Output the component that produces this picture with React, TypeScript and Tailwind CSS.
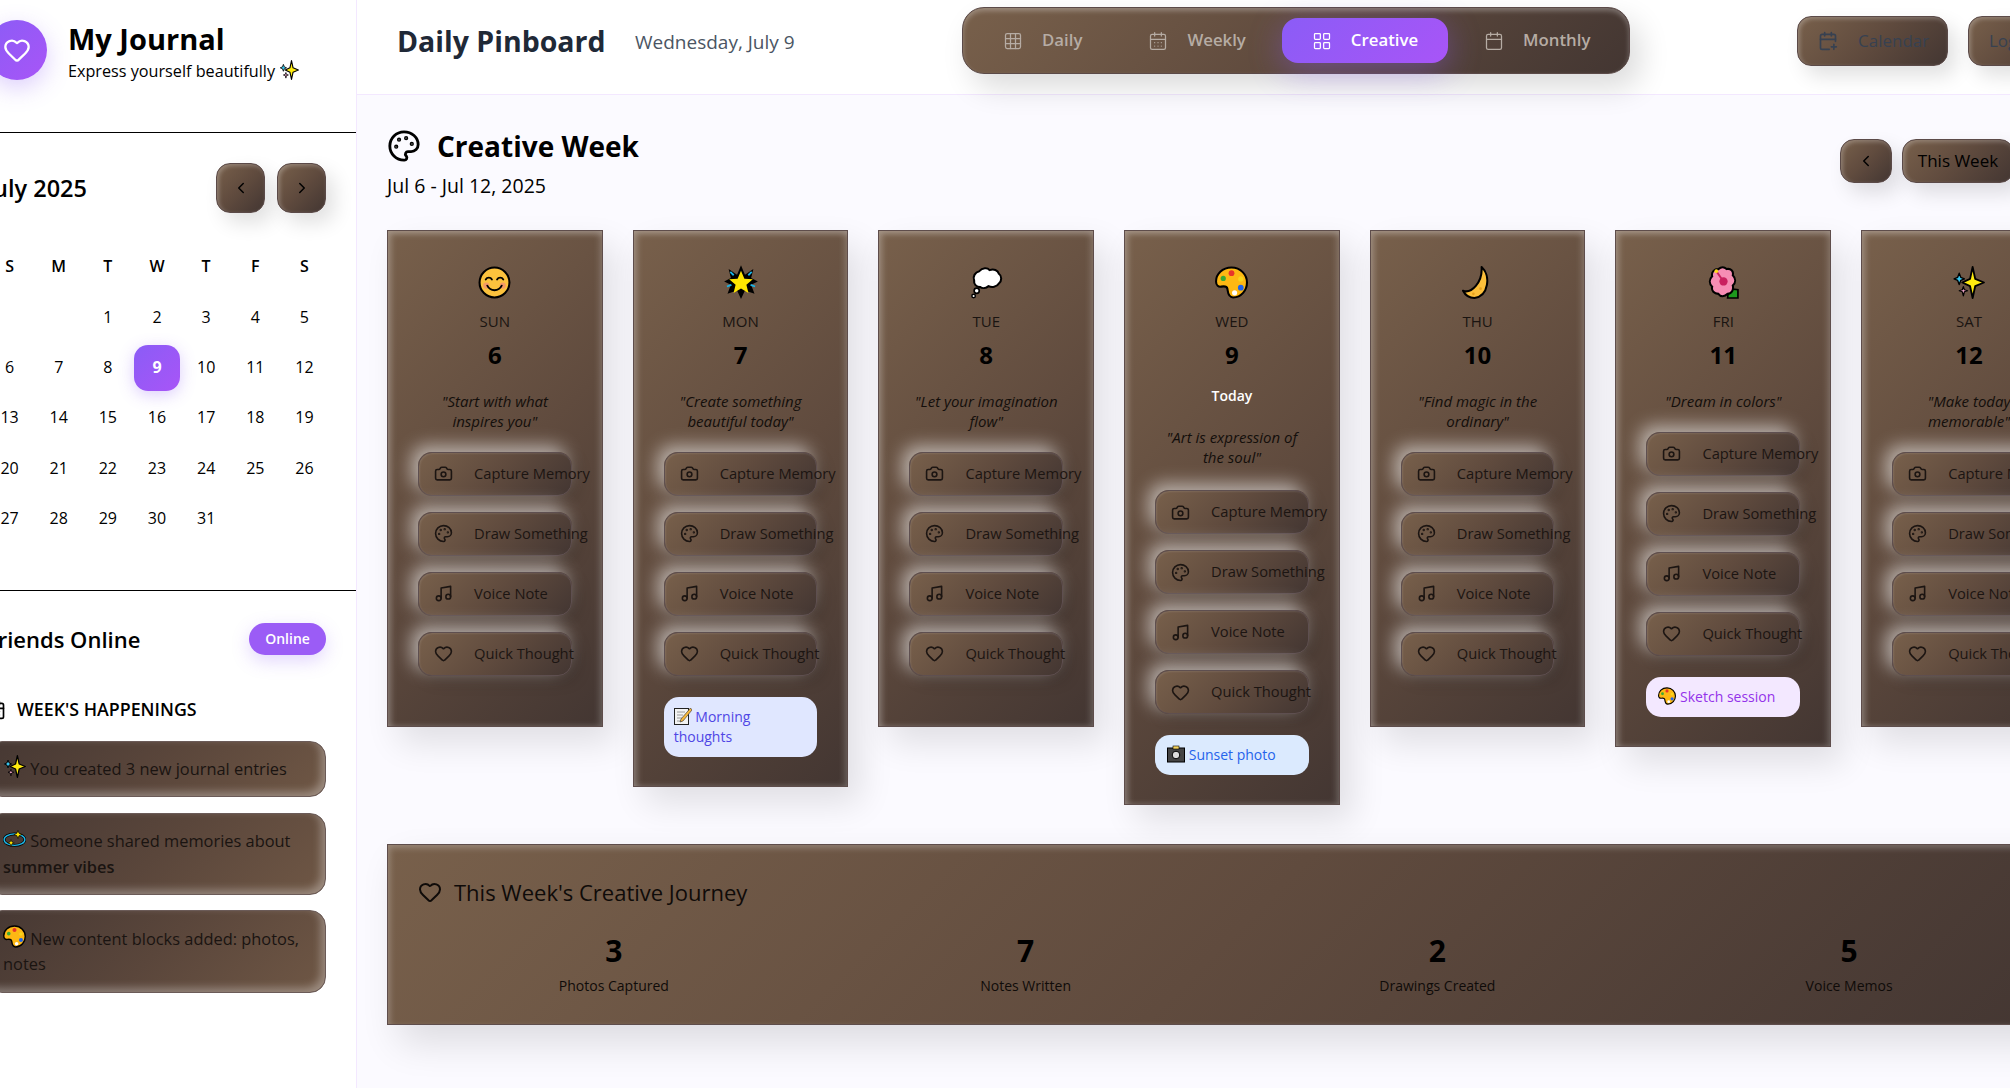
import React from "react";
import { Camera, Palette, Music, Heart, ChevronLeft, ChevronRight, Grid3x3, CalendarDays, LayoutGrid, Calendar, CalendarPlus } from "lucide-react";

const FONT = "[font-family:'Open_Sans','Noto_Sans',sans-serif]";
const BROWN = "bg-[linear-gradient(135deg,#78604b_0%,#604b3e_50%,#433632_100%)]";
const BTN = "bg-[linear-gradient(135deg,#78604b_0%,#604b3e_50%,#433632_100%)] border border-[#5b4a48] shadow-[inset_2px_2px_4px_rgba(255,255,255,0.25),8px_10px_20px_rgba(0,0,0,0.12)]";

type E = { s?: number };
const Smile = ({ s = 32 }: E) => (
  <svg width={s} height={s} viewBox="0 0 32 32"><circle cx="16" cy="16" r="14.5" fill="#fcc23d" stroke="#000" strokeWidth="2" /><circle cx="8" cy="19" r="3" fill="#f59a66" /><circle cx="24" cy="19" r="3" fill="#f59a66" /><path d="M7.500 13a3.500 3.500 0 0 1 6 0M18.500 13a3.500 3.500 0 0 1 6 0M9 19c3 6 11 6 14 0" fill="none" stroke="#000" strokeWidth="1.800" strokeLinecap="round" /></svg>
);
const Star = ({ s = 32 }: E) => (
  <svg width={s} height={s} viewBox="0 0 32 32"><path d="M16 1l3.500 8.500L27 4.500l-2 8 6 3-6 3 3 8-8.500-3L16 31l-3.500-7.500L4 26.500l3-8-6-3 6-3-2-8 7.500 5z" fill="#000" /><path d="M16 6l3 7 7.500.600-5.700 4.900 1.800 7.300L16 21.800 9.400 25.800l1.800-7.300-5.700-4.900L13 13z" fill="#ffe600" /><path d="M6.500 7l3 3M25.500 7l-3 3M3.500 20l4-1.500M28.500 20l-4-1.500" stroke="#19b4e8" strokeWidth="1.600" /></svg>
);
const Balloon = ({ s = 32 }: E) => (
  <svg width={s} height={s} viewBox="0 0 32 32"><path d="M9 5c3-3.500 8-3.500 10-1 4-1.500 8 0 9 3.500 3 2 3 7 0 9.500-2 3.500-7 4-10 2.500-2.500 2-6 2.500-8 1-4 0-6.500-3-6-6.500C2.500 10 5 6 9 5z" fill="#fff" stroke="#000" strokeWidth="2" /><circle cx="6.500" cy="24" r="2.500" fill="#fff" stroke="#000" strokeWidth="1.600" /><circle cx="3.500" cy="29" r="1.700" fill="#fff" stroke="#000" strokeWidth="1.400" /></svg>
);
const Pal = ({ s = 32 }: E) => (
  <svg width={s} height={s} viewBox="0 0 32 32"><path d="M16 1.500C7 1.500 1 8 1 15c0 4 2.500 5.500 5 5 3-.5 5.500-.5 6 2 .5 3 .5 8.500 5.500 8.500 8 0 13.500-7 13.500-14.500S25 1.500 16 1.500z" fill="#fdb813" stroke="#000" strokeWidth="2" /><circle cx="16" cy="7" r="2.800" fill="#e8352b" /><circle cx="8" cy="12" r="2.500" fill="#3aa935" /><circle cx="25" cy="12.500" r="2.500" fill="#f8d51c" /><circle cx="25" cy="21" r="2.800" fill="#1e63e9" /><circle cx="19" cy="26" r="2.500" fill="#fff" /></svg>
);
const Moon = ({ s = 32 }: E) => (
  <svg width={s} height={s} viewBox="0 0 32 32"><path d="M20 1c9 8 7 28-7 30-6 0-9-3-11-7 8 3 19-8 18-23z" fill="#fcbf3a" stroke="#000" strokeWidth="2" strokeLinejoin="round" /><circle cx="19" cy="22" r="1.300" fill="#e6a01e" /><circle cx="12" cy="27" r="1.300" fill="#e6a01e" /></svg>
);
const Flower = ({ s = 32 }: E) => (
  <svg width={s} height={s} viewBox="0 0 32 32"><path d="M21 22l9 1v8H20z" fill="#1d9a1d" stroke="#000" strokeWidth="1.600" /><path d="M11 3c3-2.500 6-2 8 0 4-1 7 2 6 6 3 3 3 7 0 10 1 4-1 8-5 8-3 3-7 3-9 0-4 0-7-3-6-7-3-3-3-7 0-10-1-4 2-7 6-7z" fill="#f68db4" stroke="#000" strokeWidth="2" /><circle cx="16" cy="15" r="4" fill="#c9215f" /><path d="M16 15L9 5" stroke="#c9215f" strokeWidth="1.800" /><circle cx="9" cy="5" r="1.800" fill="#ffd91c" /></svg>
);
const Sparkles = ({ s = 32 }: E) => (
  <svg width={s} height={s} viewBox="0 0 32 32"><path d="M20 1l2.500 11.500L31 16l-8.500 3.500L20 31l-2.500-11.500L10 16l7.500-3.500z" fill="#ffeb0f" stroke="#000" strokeWidth="1.800" strokeLinejoin="round" /><path d="M7 7l1.500 4L12 12.500 8.500 14 7 18l-1.500-4L2 12.500 5.500 11z" fill="#39c6ee" stroke="#000" strokeWidth="1.300" strokeLinejoin="round" /><path d="M11 20l1 3 3 1-3 1-1 4-1-4-3-1 3-1z" fill="#f7a8cf" stroke="#000" strokeWidth="1.200" strokeLinejoin="round" /></svg>
);
const Memo = ({ s = 18 }: E) => (
  <svg width={s} height={s} viewBox="0 0 18 18"><rect x=".5" y="1.500" width="14" height="16" fill="#f3f3f3" stroke="#222" /><path d="M3 5h8M3 8h6M3 11h5M3 14h5" stroke="#9a9a9a" /><path d="M16.500 1L7 12l-1 3 3-1L18 3z" fill="#f6b73c" stroke="#333" strokeWidth=".6" /></svg>
);
const CamE = ({ s = 18 }: E) => (
  <svg width={s} height={s} viewBox="0 0 18 18"><rect x=".5" y="3" width="17" height="14" fill="#444" stroke="#000" /><rect x="6" y="1" width="6" height="3" fill="#f4d35e" stroke="#000" strokeWidth=".6" /><circle cx="9" cy="10" r="3.800" fill="#ddd" stroke="#000" /></svg>
);
const Planet = ({ s = 18 }: E) => (
  <svg width={s} height={s} viewBox="0 0 20 20"><ellipse cx="10" cy="11" rx="9" ry="5" fill="none" stroke="#000" strokeWidth="2.500" /><ellipse cx="10" cy="11" rx="9" ry="5" fill="none" stroke="#1eb6e6" strokeWidth="1.200" /><path d="M13 3l1 2.500 2.500 1-2.500 1-1 2.500-1-2.500-2.500-1 2.500-1z" fill="#ffe600" stroke="#000" strokeWidth=".6" /><path d="M7 11l.8 2 2 .8-2 .8-.8 2-.8-2-2-.8 2-.8z" fill="#ffe600" stroke="#000" strokeWidth=".5" /></svg>
);
const Inline = ({ C, s = 18 }: { C: React.FC<E>; s?: number }) => (
  <span className="inline-flex h-[14px] items-center align-[-3px]"><C s={s} /></span>
);

const days = [
  { e: Smile, d: "SUN", n: 6, q: '"Start with what\ninspires you"' },
  { e: Star, d: "MON", n: 7, q: '"Create something\nbeautiful today"', tile: "m", es: 36 },
  { e: Balloon, d: "TUE", n: 8, q: '"Let your imagination\nflow"' },
  { e: Pal, d: "WED", n: 9, q: '"Art is expression of\nthe soul"', today: true, tile: "w" },
  { e: Moon, d: "THU", n: 10, q: '"Find magic in the\nordinary"' },
  { e: Flower, d: "FRI", n: 11, q: '"Dream in colors"', tile: "f" },
  { e: Sparkles, d: "SAT", n: 12, q: '"Make today\nmemorable"' },
];
const actions = [
  { I: Camera, t: "Capture Memory" },
  { I: Palette, t: "Draw Something" },
  { I: Music, t: "Voice Note" },
  { I: Heart, t: "Quick Thought" },
];

function ActionBtn({ I, t }: { I: any; t: string }) {
  return (
    <div className={`h-[44px] rounded-[14px] ${BROWN} border border-[#5e4f50] flex items-center pl-[15px] gap-[21px] whitespace-nowrap text-[14.700px] font-medium text-[#1c1512] shadow-[-6px_-6px_18px_rgba(255,255,255,0.58),5px_5px_15px_rgba(0,0,0,0.18),inset_1px_1px_2px_rgba(255,255,255,0.1)]`}>
      <I size={19} className="shrink-0" strokeWidth={2} />
      <span>{t}</span>
    </div>
  );
}

function DayCard({ e: Em, d, n, q, today, tile, es }: any) {
  return (
    <div className={`w-[215.700px] shrink-0 self-start ${BROWN} border border-[#5e4d4b] px-[30px] pt-[31px] pb-[29px] text-center text-[#1a1411] shadow-[inset_3px_3px_6px_rgba(255,255,255,0.28),inset_-3px_0_6px_rgba(255,255,255,0.16),12px_16px_32px_rgba(0,0,0,0.11)]`}>
      <div className="h-[40px] flex items-center justify-center"><Em s={es ?? 33} /></div>
      <div className="mt-[8px] text-[15px] font-medium leading-[22.4px]">{d}</div>
      <div className="mt-[4px] text-[24px] font-bold leading-[38.4px] text-black">{n}</div>
      {today && <div className="mt-[10px] mb-[20px] text-[14px] font-semibold leading-[22.4px] text-white">Today</div>}
      <div className="mt-[16px] -mx-[8px] text-[15px] italic font-medium leading-[20px] text-[#130e0b] whitespace-pre-line">{q}</div>
      <div className={`${today ? "mt-[23px]" : "mt-[21px]"} mb-[21px] flex flex-col gap-[16px] text-left`}>
        {actions.map((a) => <ActionBtn key={a.t} {...a} />)}
      </div>
      {tile === "m" && <div className="rounded-[15px] bg-[#e0e7ff] text-[#4f46e5] text-[14px] leading-[20px] px-[10px] py-[10px] text-left"><Inline C={Memo} /> Morning thoughts</div>}
      {tile === "w" && <div className="rounded-[15px] bg-[#dbeafe] text-[#2563eb] text-[14px] leading-[20px] px-[12px] py-[10px] text-left whitespace-nowrap"><Inline C={CamE} /> Sunset photo</div>}
      {tile === "f" && <div className="rounded-[15px] bg-[#f3e8ff] text-[#9333ea] text-[14px] leading-[20px] px-[12px] py-[10px] text-left whitespace-nowrap"><Inline C={Pal} /> Sketch session</div>}
    </div>
  );
}

const weeks = ["S", "M", "T", "W", "T", "F", "S"];
const cal: (number | null)[] = [null, null, 1, 2, 3, 4, 5, 6, 7, 8, 9, 10, 11, 12, 13, 14, 15, 16, 17, 18, 19, 20, 21, 22, 23, 24, 25, 26, 27, 28, 29, 30, 31];

function Sidebar() {
  return (
    <aside className="w-[401px] shrink-0 bg-white border-r border-[#f3e8ff] text-black h-full">
      <div className="h-[133px] border-b border-black pl-[31px] pr-[30px] pt-[16px] flex items-start gap-[21px]">
        <div className="mt-[4px] w-[60px] h-[60px] rounded-full bg-[linear-gradient(135deg,#8b5cf6,#a855f7)] flex items-center justify-center shadow-[0_8px_24px_rgba(139,92,246,0.3)]">
          <Heart size={28} className="text-white" strokeWidth={2} />
        </div>
        <div>
          <div className="text-[29px] font-bold leading-[45px]">My Journal</div>
          <div className="-mt-[2px] text-[16.200px] leading-[24px] whitespace-nowrap">Express yourself beautifully <Inline C={Sparkles} s={20} /></div>
        </div>
      </div>
      <div className="h-[458px] border-b border-black px-[30px] pt-[30px]">
        <div className="flex items-center justify-between h-[50px] mb-[31px]">
          <div className="text-[23.500px] font-semibold pt-[2px]">July 2025</div>
          <div className="flex gap-[12px]">
            <div className={`w-[49px] h-[50px] rounded-[14px] ${BTN} flex items-center justify-center`}><ChevronLeft size={18} /></div>
            <div className={`w-[49px] h-[50px] rounded-[14px] ${BTN} flex items-center justify-center`}><ChevronRight size={18} /></div>
          </div>
        </div>
        <div className="grid grid-cols-7 gap-[4px] ml-[1px] -mr-[1px]">
          {weeks.map((w, i) => <div key={i} className="h-[46.300px] flex items-center justify-center font-semibold text-[16px]">{w}</div>)}
          {cal.map((c, i) => (
            <div key={i} className={`h-[46.300px] flex items-center justify-center text-[16px] ${c === 9 ? "rounded-[14px] bg-[linear-gradient(135deg,#8b5cf6,#a855f7)] text-white font-bold shadow-[0_4px_16px_rgba(139,92,246,0.3)]" : ""}`}>{c}</div>
          ))}
        </div>
      </div>
      <div className="px-[30px] pt-[30px]">
        <div className="flex items-center justify-between">
          <div className="text-[22px] font-semibold leading-[36px] whitespace-nowrap">Friends Online</div>
          <div className="w-[77px] h-[32px] rounded-full bg-[#9b5cf6] text-white text-[14px] font-semibold flex items-center justify-center shadow-[0_6px_18px_rgba(139,92,246,0.25)]">Online</div>
        </div>
        <div className="mt-[40px] mb-[18px] flex items-center gap-[11px] text-[17.800px] font-semibold leading-[25.6px] whitespace-nowrap">
          <CalendarDays size={20} /> WEEK'S HAPPENINGS
        </div>
        <div className="flex flex-col gap-[15.500px] text-[16.400px] leading-[25.6px] text-[#1a1411]">
          {[
            <><Inline C={Sparkles} s={23} /> You created 3 new journal entries</>,
            <><Inline C={Planet} s={23} /> Someone shared memories about <b className="font-semibold">summer vibes</b></>,
            <><Inline C={Pal} s={23} /> New content blocks added: photos, notes</>,
          ].map((c, i) => (
            <div key={i} className="rounded-[16px] border border-[#6b5b58] bg-[linear-gradient(135deg,#463833_0%,#5a463b_50%,#6f5745_100%)] px-[16px] py-[14.500px] shadow-[inset_-4px_-4px_8px_rgba(255,255,255,0.32)]">{c}</div>
          ))}
        </div>
      </div>
    </aside>
  );
}

function Tab({ I, t, active }: { I: any; t: string; active?: boolean }) {
  return (
    <div className={`h-[45px] px-[30px] flex items-center gap-[19px] rounded-[16px] text-[16.800px] font-semibold whitespace-nowrap ${active ? "bg-[linear-gradient(135deg,#8b5cf6,#a855f7)] text-white shadow-[0_8px_32px_rgba(139,92,246,0.4)]" : "text-[#b6aca4]"}`}>
      <I size={20} strokeWidth={1.500} />
      <span>{t}</span>
    </div>
  );
}

function Main() {
  return (
    <main className="flex-1 min-w-0 bg-[#fbfaff] h-full">
      <header className="h-[95px] bg-white border-b border-[#f3e8ff] pl-[40px] pb-[10px] flex items-center whitespace-nowrap">
        <div className="w-[238px] text-[28.500px] font-bold text-[#1f2937]">Daily Pinboard</div>
        <div className="w-[327px] text-[19px] text-[#4b5563]">Wednesday, July 9</div>
        <div className={`w-[668px] h-[67px] -mt-[3px] rounded-[22px] ${BROWN} border border-[#5b4a48] px-[10px] flex items-center gap-[6px] shadow-[inset_0_3px_5px_rgba(255,255,255,0.28),10px_14px_30px_rgba(0,0,0,0.14)]`}>
          <Tab I={Grid3x3} t="Daily" />
          <Tab I={CalendarDays} t="Weekly" />
          <Tab I={LayoutGrid} t="Creative" active />
          <Tab I={Calendar} t="Monthly" />
        </div>
        <div className="ml-[167px] -mt-[3px] flex gap-[20px] text-[17px] font-medium text-[#374151]">
          <div className={`w-[151px] h-[50px] rounded-[14px] ${BTN} pl-[20px] flex items-center gap-[20px]`}><CalendarPlus size={20} /> Calendar</div>
          <div className={`w-[110px] h-[50px] rounded-[14px] ${BTN} pl-[20px] flex items-center`}>Logout</div>
        </div>
      </header>
      <section className="pl-[30px] pt-[27px] w-[1719px]">
        <div className="flex items-center justify-between mb-[30px]">
          <div className="text-black">
            <div className="flex items-center gap-[16px] text-[28px] font-bold leading-[48px]"><Palette size={34} /> Creative Week</div>
            <div className="text-[19.500px] leading-[29px] mt-[1px]">Jul 6 - Jul 12, 2025</div>
          </div>
          <div className="flex gap-[10px] text-[17px] font-medium text-black">
            <div className={`w-[52px] h-[44px] rounded-[14px] ${BTN} flex items-center justify-center`}><ChevronLeft size={18} /></div>
            <div className={`w-[112px] h-[44px] rounded-[14px] ${BTN} flex items-center justify-center`}>This Week</div>
            <div className={`w-[52px] h-[44px] rounded-[14px] ${BTN} flex items-center justify-center`}><ChevronRight size={18} /></div>
          </div>
        </div>
        <div className="flex gap-[30px] h-[574px] items-start">
          {days.map((d) => <DayCard key={d.d} {...d} />)}
        </div>
        <div className="mt-[40px] h-[181px] w-[1689px] bg-[linear-gradient(135deg,#78604b_0%,#604b3e_50%,#433632_100%)] border border-[#5e4d4b] px-[30px] pt-[28px] text-[#0f0b09] shadow-[inset_2px_3px_6px_rgba(255,255,255,0.25),12px_18px_36px_rgba(0,0,0,0.12)]">
          <div className="flex items-center gap-[12px] text-[22px] font-medium leading-[38px]"><Heart size={24} /> This Week's Creative Journey</div>
          <div className="mt-[16px] grid grid-cols-4 gap-[20px] text-center">
            {[["3", "Photos Captured"], ["7", "Notes Written"], ["2", "Drawings Created"], ["5", "Voice Memos"]].map(([n, l]) => (
              <div key={l}>
                <div className="text-[30px] font-bold leading-[48px] text-black">{n}</div>
                <div className="text-[14px] leading-[22.4px]">{l}</div>
              </div>
            ))}
          </div>
        </div>
      </section>
    </main>
  );
}

export default function App() {
  return (
    <div className={`w-[2010px] h-[1088px] overflow-hidden ${FONT} leading-[1.6]`}>
      <div className="-ml-[44px] w-[2160px] h-full flex">
        <Sidebar />
        <Main />
      </div>
    </div>
  );
}
